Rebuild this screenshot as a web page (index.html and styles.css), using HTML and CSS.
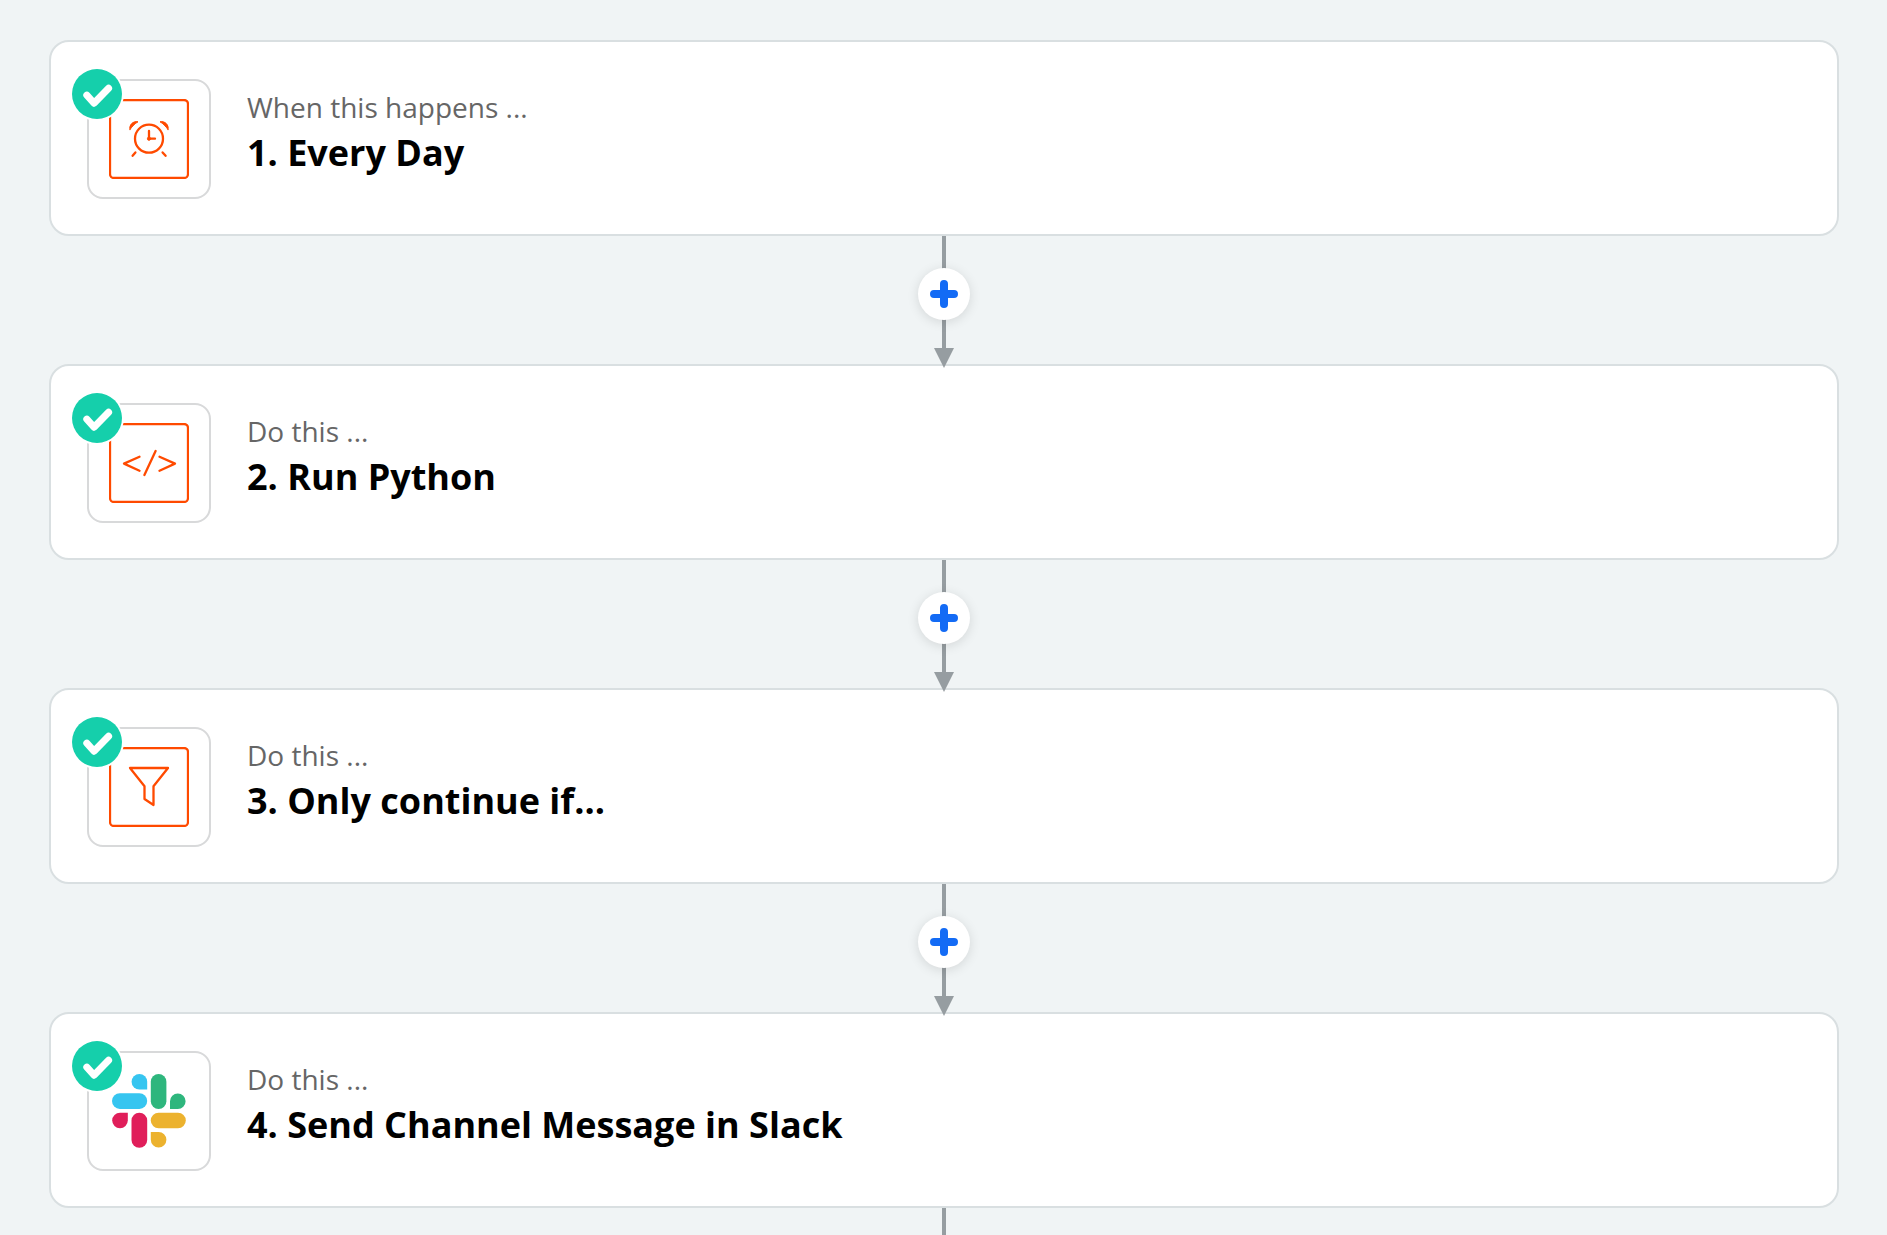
FILE: index.html
```html
<!DOCTYPE html>
<html lang="en">
<head>
<meta charset="utf-8">
<meta name="viewport" content="width=device-width, initial-scale=1">
<title>Zap editor</title>
<link rel="stylesheet" href="styles.css">
</head>
<body>
<svg class="defs" aria-hidden="true">
  <symbol id="check" viewBox="0 0 54 54">
    <circle class="badge-ring" cx="27" cy="27" r="27"/>
    <circle class="badge-disc" cx="27" cy="27" r="25"/>
    <path class="badge-tick" d="M16.8 28.2 24 36.2 38.6 21.2"/>
  </symbol>
  <symbol id="plus" viewBox="0 0 28 28">
    <path class="plus-bars" d="M14 4V24M4 14H24"/>
  </symbol>
</svg>
<main class="flow">
  <section class="step">
    <div class="tile">
      <svg class="icon" viewBox="0 0 80 80" aria-hidden="true">
        <rect x="1" y="1" width="78" height="78" rx="4"/>
        <circle cx="40" cy="39.7" r="14"/>
        <path d="M40 32V39.7H46M26.4 53.4 23.6 56.8M53.6 53.4 56.6 56.8"/>
        <circle class="solid" cx="40" cy="39.7" r="1.6"/>
        <path class="solid" d="M21 30.500C19.600 26.500 24 21.500 29 22.800C26 24.500 23.500 27 21 30.500ZM59 30.500C60.400 26.500 56 21.500 51 22.800C54 24.500 56.500 27 59 30.500Z"/>
      </svg>
      <svg class="badge" role="img" aria-label="Complete"><use href="#check"/></svg>
    </div>
    <div class="text">
      <p class="hint">When this happens ...</p>
      <h2 class="title">1. Every Day</h2>
    </div>
  </section>
  <div class="link">
    <button class="add" type="button" aria-label="Add a step"><svg class="plus" aria-hidden="true"><use href="#plus"/></svg></button>
    <span class="arrow"></span>
  </div>
  <section class="step">
    <div class="tile">
      <svg class="icon" viewBox="0 0 80 80" aria-hidden="true">
        <rect x="1" y="1" width="78" height="78" rx="4"/>
        <path d="M30.500 33.700 15 40.600 30.500 47.700M46.600 28 35.400 52M50.500 33.700 66 40.600 50.500 47.700"/>
      </svg>
      <svg class="badge" role="img" aria-label="Complete"><use href="#check"/></svg>
    </div>
    <div class="text">
      <p class="hint">Do this ...</p>
      <h2 class="title">2. Run Python</h2>
    </div>
  </section>
  <div class="link">
    <button class="add" type="button" aria-label="Add a step"><svg class="plus" aria-hidden="true"><use href="#plus"/></svg></button>
    <span class="arrow"></span>
  </div>
  <section class="step">
    <div class="tile">
      <svg class="icon" viewBox="0 0 80 80" aria-hidden="true">
        <rect x="1" y="1" width="78" height="78" rx="4"/>
        <path d="M21 21H59L44.500 39.300V58L35.500 52V39.300Z"/>
      </svg>
      <svg class="badge" role="img" aria-label="Complete"><use href="#check"/></svg>
    </div>
    <div class="text">
      <p class="hint">Do this ...</p>
      <h2 class="title">3. Only continue if...</h2>
    </div>
  </section>
  <div class="link">
    <button class="add" type="button" aria-label="Add a step"><svg class="plus" aria-hidden="true"><use href="#plus"/></svg></button>
    <span class="arrow"></span>
  </div>
  <section class="step">
    <div class="tile">
      <svg class="slack" viewBox="0 0 74 74" aria-hidden="true">
        <g fill="#36c5f0">
          <rect x="0" y="19.300" width="35.200" height="15.600" rx="7.800"/>
          <path d="M35.200 15.600H27.400A7.800 7.800 0 1 1 35.200 7.800Z"/>
        </g>
        <g fill="#2eb67d">
          <rect x="38.800" y="0" width="15.600" height="35" rx="7.800"/>
          <path d="M58 35V27.200A7.800 7.800 0 1 1 65.800 35Z"/>
        </g>
        <g fill="#ecb22e">
          <rect x="38.800" y="38.700" width="35" height="15.600" rx="7.800"/>
          <path d="M38.800 58H46.600A7.800 7.800 0 1 1 38.800 65.800Z"/>
        </g>
        <g fill="#e01e5a">
          <rect x="19.500" y="38.700" width="15.700" height="35" rx="7.800"/>
          <path d="M15.800 38.700V46.500A7.800 7.800 0 1 1 8 38.700Z"/>
        </g>
      </svg>
      <svg class="badge" role="img" aria-label="Complete"><use href="#check"/></svg>
    </div>
    <div class="text">
      <p class="hint">Do this ...</p>
      <h2 class="title">4. Send Channel Message in Slack</h2>
    </div>
  </section>
  <div class="link link-end"></div>
</main>
</body>
</html>
```
FILE: styles.css
```css
* {
  box-sizing: border-box;
}

body {
  margin: 0;
  background: #f0f4f5;
  color: #000;
  font-family: "Open Sans", "Noto Sans", sans-serif;
}

.defs {
  display: none;
}

.flow {
  display: flex;
  flex-direction: column;
  min-height: 100vh;
  padding: 40px 48px 0 49px;
}

.step {
  display: flex;
  align-items: flex-start;
  gap: 36px;
  padding: 37px 36px 35px;
  background: #fff;
  border: 2px solid #d9dfe1;
  border-radius: 20px;
}

.tile {
  position: relative;
  display: flex;
  flex: none;
  align-items: center;
  justify-content: center;
  width: 124px;
  height: 120px;
  border: 2px solid #d8d9da;
  border-radius: 16px;
}

.icon {
  width: 80px;
  height: 80px;
  fill: none;
  stroke: #ff4a00;
  stroke-width: 2.3;
  stroke-linecap: round;
  stroke-linejoin: round;
}

.solid {
  fill: #ff4a00;
  stroke-width: 1;
}

.slack {
  width: 74px;
  height: 74px;
}

.badge {
  position: absolute;
  top: -14px;
  left: -19px;
  width: 54px;
  height: 54px;
}

.badge-ring {
  fill: #fff;
}

.badge-disc {
  fill: #15cfab;
}

.badge-tick {
  fill: none;
  stroke: #fff;
  stroke-width: 7;
  stroke-linecap: round;
  stroke-linejoin: round;
}

.text {
  padding-top: 8px;
}

.hint {
  margin: 0;
  color: #666;
  font-size: 28px;
  line-height: 40px;
}

.title {
  margin: 0;
  font-size: 36px;
  font-weight: 700;
  line-height: 52px;
}

.link {
  position: relative;
  z-index: 1;
  display: flex;
  flex-direction: column;
  align-items: center;
  justify-content: space-between;
  height: 132px;
  margin-bottom: -4px;
  padding-top: 32px;
  background: linear-gradient(#969da1, #969da1) center top / 4px 114px no-repeat;
}

.link-end {
  flex: 1;
  min-height: 27px;
  margin: 0;
  padding: 0;
  background-size: 4px 100%;
}

.add {
  display: flex;
  align-items: center;
  justify-content: center;
  width: 52px;
  height: 52px;
  padding: 0;
  border: 0;
  border-radius: 50%;
  background: #fff;
  box-shadow: 0 2px 12px rgba(0, 0, 0, 0.12);
}

.plus {
  width: 28px;
  height: 28px;
}

.plus-bars {
  fill: none;
  stroke: #136bf5;
  stroke-width: 8;
  stroke-linecap: round;
}

.arrow {
  width: 20px;
  height: 20px;
  background: #969da1;
  clip-path: polygon(0 0, 100% 0, 50% 100%);
}
```
